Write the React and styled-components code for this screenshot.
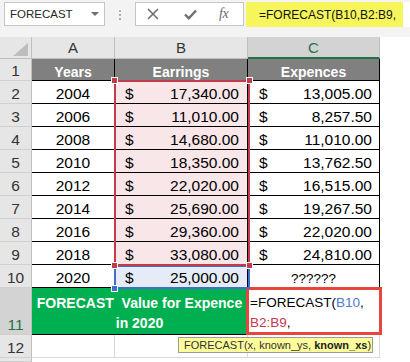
import React from 'react';
import styled, { createGlobalStyle } from 'styled-components';

const GlobalStyle = createGlobalStyle`
  html, body { margin: 0; padding: 0; background: #fff; }
  body { font-family: "Liberation Sans", Arial, sans-serif; }
  * { box-sizing: border-box; }
`;

const Window = styled.div`
  width: 410px;
  height: 362px;
  overflow: hidden;
  display: flex;
  flex-direction: column;
  background: #fff;
`;

/* ---------- formula bar ---------- */
const Bar = styled.div`
  flex: none;
  height: 37px;
  background: #f3f3f3;
  display: flex;
  align-items: flex-start;
  padding-top: 2px;
`;

const NameBox = styled.div`
  margin-left: 4px;
  width: 101px;
  height: 24px;
  background: #fff;
  border: 1px solid #c6c6c6;
  display: flex;
  align-items: center;
  justify-content: space-between;
  padding: 0 5px 0 5px;
  font-size: 11.5px;
  color: #262626;
`;

const Caret = styled.span`
  width: 0;
  height: 0;
  border-left: 4px solid transparent;
  border-right: 4px solid transparent;
  border-top: 4px solid #6f6f6f;
`;

const Grip = styled.div`
  margin: 8px 0 0 14px;
  width: 2px;
  display: flex;
  flex-direction: column;
  gap: 2px;
`;

const GripDot = styled.span`
  width: 2px;
  height: 2px;
  background: #b0b0b0;
`;

const ButtonBox = styled.div`
  margin-left: 14px;
  width: 109px;
  height: 24px;
  background: #fff;
  border: 1px solid #c6c6c6;
  display: flex;
  align-items: center;
  padding-left: 11px;
`;

const IconSlot = styled.span`
  display: flex;
  align-items: center;
  margin-left: ${p => p.$gap || 0}px;
`;

const Fx = styled.span`
  font-family: "Liberation Serif", "Times New Roman", serif;
  font-style: italic;
  font-size: 14px;
  color: #6a6a6a;
  letter-spacing: -0.5px;
`;

const FormulaInput = styled.div`
  margin-left: 2px;
  flex: 1;
  height: 25px;
  background: #fff;
  display: flex;
`;

const Highlight = styled.div`
  width: 157px;
  height: 100%;
  background: #f6f65c;
  display: flex;
  align-items: center;
  padding-left: 13px;
  font-size: 12px;
  color: #111;
  white-space: nowrap;
`;

/* ---------- sheet ---------- */
const Sheet = styled.div`
  flex: 1;
  display: grid;
  grid-template-columns: 32px 83px 133px 132px 1fr;
  grid-template-rows: 22px 22px repeat(9, 23px) 47px 23px 1fr;
`;

const Placed = styled.div`
  grid-row: ${p => p.$r};
  grid-column: ${p => p.$c};
`;

const Corner = styled(Placed)`
  background: #e6e6e6;
  border-right: 1px solid #bfbfbf;
  border-bottom: 1px solid #bfbfbf;
  display: flex;
  align-items: flex-end;
  justify-content: flex-end;
  padding: 0 3px 2px 0;
`;

const CornerTriangle = styled.span`
  width: 0;
  height: 0;
  border-left: 15px solid transparent;
  border-bottom: 13px solid #bdbdbd;
`;

const ColHeader = styled(Placed)`
  background: ${p => (p.$active ? '#d3d3d3' : '#e6e6e6')};
  border-right: 1px solid #bfbfbf;
  border-bottom: ${p => (p.$active ? '2px solid #217346' : '1px solid #bfbfbf')};
  color: ${p => (p.$active ? '#217346' : '#333')};
  font-size: 15px;
  display: flex;
  align-items: center;
  justify-content: center;
  padding-top: ${p => (p.$active ? 1 : 0)}px;
`;

const ColFiller = styled(Placed)`
  background: #fff;
`;

const RowHeader = styled(Placed)`
  background: ${p => (p.$active ? '#d3d3d3' : '#e6e6e6')};
  border-right: 1px solid #bfbfbf;
  border-bottom: 1px solid #d0d0d0;
  color: ${p => (p.$active ? '#217346' : '#333')};
  font-size: 15.5px;
  line-height: 1.15;
  display: flex;
  align-items: flex-end;
  justify-content: center;
`;

const Cell = styled(Placed)`
  border-right: 1px solid ${p => (p.$grid ? '#d9d9d9' : '#000')};
  border-bottom: 1px solid ${p => (p.$grid ? '#d9d9d9' : '#000')};
  background: ${p => p.$bg || '#fff'};
  font-size: 15.5px;
  line-height: 1.15;
  display: flex;
  align-items: flex-end;
  color: #000;
`;

const HeadCell = styled(Cell)`
  background: #808080;
  color: #fff;
  font-weight: bold;
  font-size: 14px;
  justify-content: center;
`;

const CenterCell = styled(Cell)`
  justify-content: center;
  font-size: ${p => p.$size || 15.5}px;
`;

const MoneyCell = styled(Cell)`
  justify-content: space-between;
  padding: 0 ${p => p.$pr}px 0 ${p => p.$pl}px;
`;

const GreenCell = styled(Cell)`
  background: #00b050;
  color: #fff;
  font-weight: bold;
  font-size: 14px;
  line-height: 20px;
  flex-direction: column;
  align-items: center;
  justify-content: flex-end;
  padding-bottom: 1px;
  white-space: pre;
`;

const Blank = styled(Placed)`
  background: #fff;
`;

/* ---------- overlays ---------- */
const RangeBox = styled(Placed)`
  position: relative;
  margin: 0 -2px -1px -1px;
  margin-top: ${p => p.$mt || 0}px;
  border: 2px solid ${p => p.$color};
  pointer-events: none;
`;

const Handle = styled.span`
  position: absolute;
  width: 7px;
  height: 7px;
  background: ${p => p.$color};
  border: 1px solid #fff;
  ${p => (p.$top ? 'top: -5px;' : 'bottom: -5px;')}
  ${p => (p.$left ? 'left: -5px;' : 'right: -5px;')}
`;

const EditBox = styled(Placed)`
  margin: -1px -2px 0 -2px;
  border: 3px solid #e8453f;
  background: #fff;
  padding: 3px 0 0 1px;
  font-size: 13.5px;
  line-height: 20px;
  color: #000;
  white-space: nowrap;
`;

const Ref = styled.span`
  color: ${p => p.$color};
`;

const Tooltip = styled(Placed)`
  justify-self: start;
  align-self: start;
  margin: 2px 0 0 63px;
  width: 195px;
  height: 16px;
  background: #fdfd9c;
  border: 1px solid #9a9a9a;
  font-size: 11px;
  line-height: 14px;
  color: #333;
  padding-left: 5px;
  white-space: nowrap;
`;

const Bold = styled.b`
  font-weight: bold;
  color: #222;
`;

const rows = [
  ['2004', '17,340.00', '13,005.00'],
  ['2006', '11,010.00', '8,257.50'],
  ['2008', '14,680.00', '11,010.00'],
  ['2010', '18,350.00', '13,762.50'],
  ['2012', '22,020.00', '16,515.00'],
  ['2014', '25,690.00', '19,267.50'],
  ['2016', '29,360.00', '22,020.00'],
  ['2018', '33,080.00', '24,810.00'],
];

const RED = '#c23b4b';
const BLUE = '#3f6fc6';

export default function App() {
  return (
    <Window>
      <GlobalStyle />
      <Bar>
        <NameBox>
          <span>FORECAST</span>
          <Caret />
        </NameBox>
        <Grip>
          <GripDot />
          <GripDot />
          <GripDot />
        </Grip>
        <ButtonBox>
          <IconSlot>
            <svg width="12" height="12" viewBox="0 0 12 12">
              <path d="M1 1 L11 11 M11 1 L1 11" stroke="#6f6f6f" strokeWidth="1.6" fill="none" />
            </svg>
          </IconSlot>
          <IconSlot $gap={25}>
            <svg width="13" height="11" viewBox="0 0 13 11">
              <path d="M1 5.5 L4.8 9.3 L12 1.5" stroke="#6f6f6f" strokeWidth="2.4" fill="none" />
            </svg>
          </IconSlot>
          <IconSlot $gap={22}>
            <Fx>fx</Fx>
          </IconSlot>
        </ButtonBox>
        <FormulaInput>
          <Highlight>=FORECAST(B10,B2:B9,</Highlight>
        </FormulaInput>
      </Bar>

      <Sheet>
        <Corner $r={1} $c={1}>
          <CornerTriangle />
        </Corner>
        <ColHeader $r={1} $c={2}>A</ColHeader>
        <ColHeader $r={1} $c={3}>B</ColHeader>
        <ColHeader $r={1} $c={4} $active>C</ColHeader>
        <ColFiller $r={1} $c={5} />

        {Array.from({ length: 12 }, (_, i) => (
          <RowHeader key={i} $r={i + 2} $c={1} $active={i === 10}>
            {i + 1}
          </RowHeader>
        ))}
        <RowHeader $r={14} $c={1} />

        <HeadCell $r={2} $c={2}>Years</HeadCell>
        <HeadCell $r={2} $c={3}>Earrings</HeadCell>
        <HeadCell $r={2} $c={4}>Expences</HeadCell>

        {rows.map((row, i) => (
          <React.Fragment key={row[0]}>
            <CenterCell $r={i + 3} $c={2}>{row[0]}</CenterCell>
            <MoneyCell $r={i + 3} $c={3} $bg="#f8e6e8" $pl={10} $pr={8}>
              <span>$</span>
              <span>{row[1]}</span>
            </MoneyCell>
            <MoneyCell $r={i + 3} $c={4} $pl={11} $pr={7}>
              <span>$</span>
              <span>{row[2]}</span>
            </MoneyCell>
          </React.Fragment>
        ))}

        <CenterCell $r={11} $c={2}>2020</CenterCell>
        <MoneyCell $r={11} $c={3} $bg="#e5ecf7" $pl={10} $pr={8}>
          <span>$</span>
          <span>25,000.00</span>
        </MoneyCell>
        <CenterCell $r={11} $c={4} $size={13.5}>??????</CenterCell>

        <GreenCell $r={12} $c="2 / span 2">
          <span>{'FORECAST  Value for Expence'}</span>
          <span>in 2020</span>
        </GreenCell>
        <Cell $r={12} $c={4} />

        <Cell $r={13} $c={2} $grid />
        <Cell $r={13} $c={3} $grid />
        <Cell $r={13} $c={4} $grid />
        <Blank $r={14} $c="2 / span 3" />

        <RangeBox $r={11} $c={3} $color={BLUE}>
          <Handle $color={BLUE} $left />
        </RangeBox>
        <RangeBox $r="3 / span 8" $c={3} $color={RED} $mt={-1}>
          <Handle $color={RED} $top $left />
          <Handle $color={RED} $top />
          <Handle $color={RED} $left />
          <Handle $color={RED} />
        </RangeBox>

        <EditBox $r={12} $c={4}>
          <div>
            =FORECAST(<Ref $color="#4a7bd0">B10</Ref>,
          </div>
          <div>
            <Ref $color="#c8384f">B2:B9</Ref>,
          </div>
        </EditBox>

        <Tooltip $r={13} $c="3 / span 3">
          FORECAST(x, known_ys, <Bold>known_xs</Bold>)
        </Tooltip>
      </Sheet>
    </Window>
  );
}
